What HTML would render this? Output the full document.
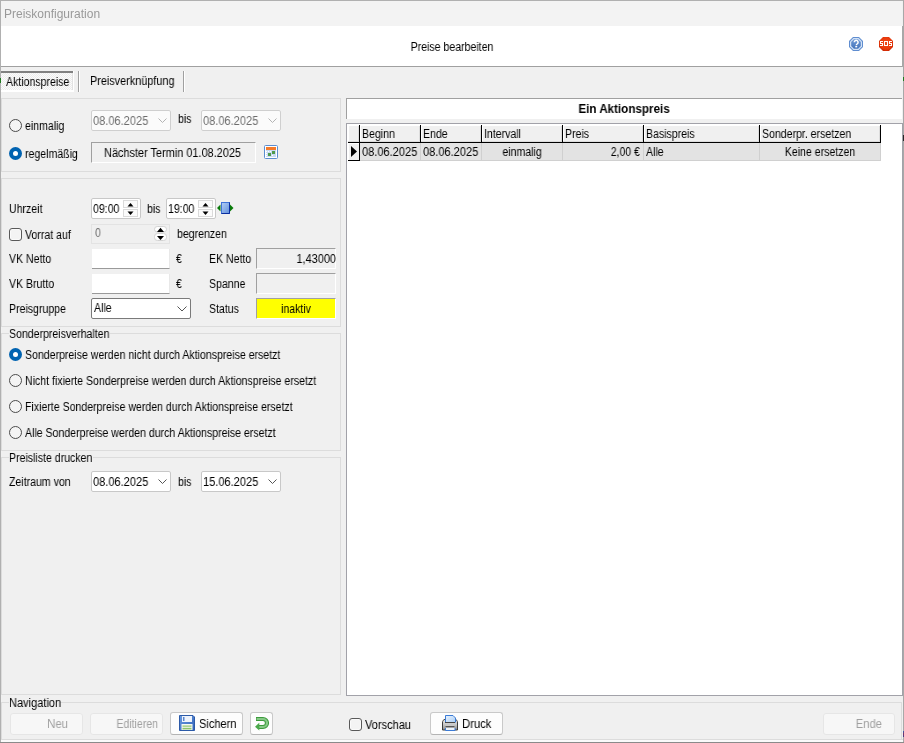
<!DOCTYPE html>
<html><head><meta charset="utf-8">
<style>
*{margin:0;padding:0;box-sizing:border-box}
html,body{width:904px;height:743px;overflow:hidden;background:#f0f0f0}
body{position:relative;font-family:"Liberation Sans",sans-serif;font-size:12px;color:#000}
.a{position:absolute}
.t{position:absolute;font-size:12px;line-height:14px;white-space:nowrap;transform:scaleX(.88);transform-origin:0 0;will-change:transform}
.dt{transform:scaleX(.92)}
.tc{text-align:center;transform-origin:50% 0}
.tr{text-align:right;transform-origin:100% 0}
.grp{position:absolute;border:1px solid #dcdcdc}
.radio{position:absolute;width:13px;height:13px;border-radius:50%;border:1px solid #4a4a4a;background:#f4f4f4}
.radio.on{border:none;background:#0063b1}
.radio.on:after{content:"";position:absolute;left:4px;top:4px;width:5px;height:5px;border-radius:50%;background:#fff}
.chk{position:absolute;width:13px;height:13px;border-radius:3px;border:1px solid #595959;background:#f4f4f4;box-shadow:inset 0 0 0 1px #fbfbfb}
.dp{position:absolute;border:1px solid #7a7a7a;background:#fff;border-radius:2px}
.dp.dis{border-color:#cfcfcf;background:#fbfbfb}
.sunk{position:absolute;background:#f0f0f0;border-top:1px solid #a0a0a0;border-left:1px solid #a0a0a0;border-bottom:1px solid #fff;border-right:1px solid #fff}
.btn{position:absolute;border:1px solid #c9c9c9;border-bottom-color:#b4b4b4;background:#fdfdfd;border-radius:3px}
.btn.dis{border-color:#e6e6e6;background:#f7f7f7}
.gray{color:#6d6d6d}
.dis-t{color:#a0a0a0}
</style></head><body>
<!-- window border -->
<div class="a" style="left:0;top:0;width:904px;height:1px;background:#b0b0b0"></div>
<div class="a" style="left:0;top:0;width:1px;height:743px;background:#b0b0b0"></div>
<div class="a" style="left:903px;top:0;width:1px;height:743px;background:#a8a8a8"></div>
<div class="a" style="left:902px;top:26px;width:1px;height:41px;background:#a8a8a8"></div>
<div class="a" style="left:0;top:742px;width:904px;height:1px;background:#8a8a8a"></div>
<!-- title bar -->
<div class="a" style="left:1px;top:1px;width:901px;height:25px;background:#f3f3f3"></div>
<div class="t" style="left:4px;top:7px;color:#999;transform:none">Preiskonfiguration</div>
<!-- header -->
<div class="a" style="left:1px;top:26px;width:901px;height:40px;background:#fff"></div>
<div class="a" style="left:1px;top:66px;width:901px;height:1px;background:#a0a0a0"></div>
<div class="t tc" style="left:352px;width:200px;top:40px">Preise bearbeiten</div>
<!-- help / sos icons -->
<svg class="a" style="left:849px;top:37px" width="14" height="14" viewBox="0 0 14 14">
 <defs><linearGradient id="hg" x1="0" y1="0" x2="0" y2="1"><stop offset="0" stop-color="#6f9ad6"/><stop offset="1" stop-color="#4474bb"/></linearGradient></defs>
 <polygon points="4,0 10,0 14,4 14,10 10,14 4,14 0,10 0,4" fill="#5f8dd0"/>
 <polygon points="4.4,1 9.6,1 13,4.4 13,9.6 9.6,13 4.4,13 1,9.6 1,4.4" fill="#d3e2f5"/>
 <polygon points="4.9,2.2 9.1,2.2 11.8,4.9 11.8,9.1 9.1,11.8 4.9,11.8 2.2,9.1 2.2,4.9" fill="url(#hg)"/>
 <path d="M5.3 5.3a1.9 1.9 0 1 1 2.9 1.6c-.7.4-.9.7-.9 1.4" fill="none" stroke="#fff" stroke-width="1.5"/>
 <rect x="6.3" y="9" width="1.9" height="1.4" fill="#fff"/>
</svg>
<svg class="a" style="left:879px;top:37px" width="14" height="14" viewBox="0 0 14 14">
 <defs><radialGradient id="sg" cx=".5" cy=".45" r=".6"><stop offset="0" stop-color="#f24a1a"/><stop offset=".7" stop-color="#e83a0c"/><stop offset="1" stop-color="#c42200"/></radialGradient></defs>
 <polygon points="4,0 10,0 14,4 14,10 10,14 4,14 0,10 0,4" fill="url(#sg)"/>
 <g fill="#fff">
  <rect x="1" y="4" width="3" height="1"/><rect x="1" y="5" width="1" height="1"/><rect x="1" y="6" width="3" height="1"/><rect x="3" y="7" width="1" height="1"/><rect x="1" y="8" width="3" height="1"/>
  <rect x="5" y="4" width="4" height="1"/><rect x="5" y="5" width="1" height="3"/><rect x="8" y="5" width="1" height="3"/><rect x="5" y="8" width="4" height="1"/>
  <rect x="10" y="4" width="3" height="1"/><rect x="10" y="5" width="1" height="1"/><rect x="10" y="6" width="3" height="1"/><rect x="12" y="7" width="1" height="1"/><rect x="10" y="8" width="3" height="1"/>
 </g>
</svg>
<!-- tabs -->
<div class="a" style="left:0;top:78px;width:1px;height:5px;background:#1e7a1e"></div>
<div class="a" style="left:903px;top:77px;width:1px;height:4px;background:#1e7a1e"></div>
<div class="a" style="left:1px;top:71px;width:73px;height:21px;background:#fff"></div>
<div class="a" style="left:1px;top:73px;width:71px;height:17px;background:repeating-conic-gradient(#fbfbfb 0 25%,#ececec 0 50%) 0 0/2px 2px"></div>
<div class="a" style="left:72px;top:73px;width:1px;height:17px;background:#e2e2e2"></div>
<div class="a" style="left:1px;top:71px;width:72px;height:2px;background:#808080"></div>
<div class="t" style="left:6px;top:75px">Aktionspreise</div>
<div class="a" style="left:78px;top:71px;width:1px;height:21px;background:#a0a0a0"></div>
<div class="a" style="left:79px;top:71px;width:1px;height:21px;background:#fff"></div>
<div class="t" style="left:90px;top:74px;transform:scaleX(.905)">Preisverknüpfung</div>
<div class="a" style="left:183px;top:71px;width:1px;height:21px;background:#a0a0a0"></div>
<div class="a" style="left:184px;top:71px;width:1px;height:21px;background:#fff"></div>

<!-- group 1 -->
<div class="grp" style="left:1px;top:98px;width:340px;height:74px"></div>
<div class="radio" style="left:9px;top:119px"></div>
<div class="t" style="left:25px;top:119px">einmalig</div>
<div class="radio on" style="left:9px;top:147px"></div>
<div class="t" style="left:25px;top:147px">regelmäßig</div>
<div class="dp dis" style="left:91px;top:110px;width:80px;height:21px"></div>
<div class="t dt gray" style="left:93px;top:114px">08.06.2025</div>
<svg class="a" style="left:158px;top:118px" width="10" height="6"><path d="M.5 .5L4.5 4.5 8.5.5" fill="none" stroke="#b4b4b4"/></svg>
<div class="t" style="left:178px;top:112px">bis</div>
<div class="dp dis" style="left:201px;top:110px;width:80px;height:21px"></div>
<div class="t dt gray" style="left:203px;top:114px">08.06.2025</div>
<svg class="a" style="left:268px;top:118px" width="10" height="6"><path d="M.5 .5L4.5 4.5 8.5.5" fill="none" stroke="#b4b4b4"/></svg>
<div class="sunk" style="left:91px;top:142px;width:165px;height:21px"></div>
<div class="t tc" style="left:89.5px;width:165px;top:146px;transform:scaleX(.91)">Nächster Termin 01.08.2025</div>
<svg class="a" style="left:264px;top:145px" width="14" height="14" viewBox="0 0 14 14">
 <rect x=".5" y=".5" width="13" height="13" rx="1" fill="#fff" stroke="#5a8dd0"/>
 <rect x="2" y="2" width="10" height="3" fill="#f47a2a"/>
 <rect x="2" y="5" width="10" height="7" fill="#c8daf2"/>
 <g fill="#fff"><rect x="2" y="6" width="1" height="1"/><rect x="4" y="6" width="1" height="1"/><rect x="6" y="6" width="1" height="1"/><rect x="8" y="6" width="1" height="1"/><rect x="10" y="6" width="1" height="1"/>
 <rect x="2" y="8" width="1" height="1"/><rect x="4" y="8" width="1" height="1"/><rect x="10" y="8" width="1" height="1"/>
 <rect x="2" y="10" width="1" height="1"/><rect x="6" y="10" width="1" height="1"/><rect x="8" y="10" width="1" height="1"/></g>
 <rect x="4" y="8" width="3" height="3" fill="#4f9a4a"/>
 <rect x="8" y="6" width="3" height="3" fill="#4f9a4a"/>
</svg>

<!-- group 2 -->
<div class="grp" style="left:1px;top:178px;width:340px;height:149px"></div>
<div class="t" style="left:9px;top:202px">Uhrzeit</div>
<div class="dp" style="left:91px;top:198px;width:50px;height:21px;border-color:#c8c8c8"></div>
<div class="t" style="left:93px;top:202px">09:00</div>
<div class="t" style="left:147px;top:202px">bis</div>
<div class="dp" style="left:166px;top:198px;width:50px;height:21px;border-color:#c8c8c8"></div>
<div class="t" style="left:168px;top:202px">19:00</div>
<div class="a" style="left:123px;top:200px;width:15px;height:8px;border:1px solid #dadada;background:#fbfbfb"></div>
<div class="a" style="left:123px;top:209px;width:15px;height:8px;border:1px solid #dadada;background:#fbfbfb"></div>
<svg class="a" style="left:127px;top:202px" width="7" height="14"><path d="M.5 4.5L3.5 1 6.5 4.5z" fill="#000"/><path d="M.5 9.5L3.5 13 6.5 9.5z" fill="#000"/></svg>
<div class="a" style="left:198px;top:200px;width:15px;height:8px;border:1px solid #dadada;background:#fbfbfb"></div>
<div class="a" style="left:198px;top:209px;width:15px;height:8px;border:1px solid #dadada;background:#fbfbfb"></div>
<svg class="a" style="left:202px;top:202px" width="7" height="14"><path d="M.5 4.5L3.5 1 6.5 4.5z" fill="#000"/><path d="M.5 9.5L3.5 13 6.5 9.5z" fill="#000"/></svg>
<svg class="a" style="left:216px;top:201px" width="19" height="14" viewBox="0 0 19 14">
 <defs><linearGradient id="bg1" x1="0" y1="0" x2="1" y2="1"><stop offset="0" stop-color="#b4cff5"/><stop offset="1" stop-color="#5f8fdc"/></linearGradient></defs>
 <path d="M1 7L4.5 3.5 4.5 10.5z" fill="#0a7a0a"/>
 <path d="M14 3.5L17.5 7 14 10.5z" fill="#0a7a0a"/>
 <rect x="5.5" y="1.5" width="8" height="11" fill="url(#bg1)" stroke="#3f73d8"/>
 <path d="M13.5 1.5v11h-8" fill="none" stroke="#0b2ea0"/>
</svg>
<div class="chk" style="left:9px;top:228px"></div>
<div class="t" style="left:25px;top:228px">Vorrat auf</div>
<div class="a" style="left:91px;top:224px;width:79px;height:20px;border:1px solid #e3e3e3;background:#f0f0f0"></div>
<div class="t gray" style="left:95px;top:226px">0</div>
<svg class="a" style="left:154px;top:226px" width="13" height="15" viewBox="0 0 13 15">
 <rect x=".5" y=".5" width="12" height="5.5" rx="2.75" fill="#fff" stroke="#d2d2d2"/>
 <rect x=".5" y="7.5" width="12" height="7" rx="3" fill="#fff" stroke="#d2d2d2"/>
 <path d="M3 5.9L6.5 1.8 10 5.9z" fill="#000"/>
 <path d="M3 9.9L10 9.9 6.5 14z" fill="#000"/>
</svg>
<div class="t" style="left:177px;top:227px">begrenzen</div>
<div class="t" style="left:9px;top:252px">VK Netto</div>
<div class="a" style="left:92px;top:249px;width:78px;height:20px;background:#fff;border-bottom:1px solid #9a9a9a;border-right:1px solid #e8e8e8"></div>
<div class="t" style="left:176px;top:252px">€</div>
<div class="t" style="left:9px;top:277px">VK Brutto</div>
<div class="a" style="left:92px;top:274px;width:78px;height:20px;background:#fff;border-bottom:1px solid #9a9a9a;border-right:1px solid #e8e8e8"></div>
<div class="t" style="left:176px;top:277px">€</div>
<div class="t" style="left:9px;top:302px">Preisgruppe</div>
<div class="a" style="left:91px;top:298px;width:100px;height:21px;background:#fff;border:1px solid #7a7a7a;border-radius:2px"></div>
<div class="t" style="left:94px;top:301px">Alle</div>
<svg class="a" style="left:177px;top:306px" width="10" height="6"><path d="M.5 .5L5 5 9.5.5" fill="none" stroke="#555"/></svg>
<div class="t" style="left:209px;top:252px">EK Netto</div>
<div class="sunk" style="left:256px;top:248px;width:80px;height:21px"></div>
<div class="t tr" style="left:236px;width:100px;top:252px;transform:scaleX(.91)">1,43000</div>
<div class="t" style="left:209px;top:277px">Spanne</div>
<div class="sunk" style="left:256px;top:273px;width:80px;height:21px"></div>
<div class="t" style="left:209px;top:302px">Status</div>
<div class="sunk" style="left:256px;top:298px;width:80px;height:21px;background:#ffff00"></div>
<div class="t tc" style="left:256px;width:80px;top:302px">inaktiv</div>

<!-- group 3 -->
<div class="grp" style="left:1px;top:333px;width:340px;height:118px"></div>
<div class="a" style="left:9px;top:328px;width:101px;height:12px;background:#f0f0f0"></div>
<div class="t" style="left:9px;top:327px">Sonderpreisverhalten</div>
<div class="radio on" style="left:9px;top:348px"></div>
<div class="t" style="left:25px;top:348px">Sonderpreise werden nicht durch Aktionspreise ersetzt</div>
<div class="radio" style="left:9px;top:374px"></div>
<div class="t" style="left:25px;top:374px">Nicht fixierte Sonderpreise werden durch Aktionspreise ersetzt</div>
<div class="radio" style="left:9px;top:400px"></div>
<div class="t" style="left:25px;top:400px">Fixierte Sonderpreise werden durch Aktionspreise ersetzt</div>
<div class="radio" style="left:9px;top:426px"></div>
<div class="t" style="left:25px;top:426px">Alle Sonderpreise werden durch Aktionspreise ersetzt</div>

<!-- group 4 -->
<div class="grp" style="left:1px;top:457px;width:340px;height:238px"></div>
<div class="a" style="left:9px;top:452px;width:84px;height:12px;background:#f0f0f0"></div>
<div class="t" style="left:9px;top:451px">Preisliste drucken</div>
<div class="t" style="left:9px;top:475px">Zeitraum von</div>
<div class="dp" style="left:91px;top:471px;width:80px;height:21px;border-color:#c8c8c8"></div>
<div class="t dt" style="left:93px;top:475px">08.06.2025</div>
<svg class="a" style="left:158px;top:479px" width="10" height="6"><path d="M.5 .5L4.5 4.5 8.5.5" fill="none" stroke="#555"/></svg>
<div class="t" style="left:178px;top:475px">bis</div>
<div class="dp" style="left:201px;top:471px;width:80px;height:21px;border-color:#c8c8c8"></div>
<div class="t dt" style="left:203px;top:475px">15.06.2025</div>
<svg class="a" style="left:268px;top:479px" width="10" height="6"><path d="M.5 .5L4.5 4.5 8.5.5" fill="none" stroke="#555"/></svg>

<!-- right panel -->
<div class="a" style="left:346px;top:98px;width:556px;height:21px;background:#fff;border-top:1px solid #a0a0a0;border-left:1px solid #a0a0a0"></div>
<div class="t tc" style="left:346px;width:556px;top:102px;font-weight:bold;transform:scaleX(.97)">Ein Aktionspreis</div>
<div class="a" style="left:346px;top:123px;width:557px;height:573px;background:#fff;border:1px solid #a2a2a9"></div>
<!-- grid -->
<div class="a" style="left:348px;top:125px;width:532px;height:17px;background:#f0f0f0"></div>
<div class="a" style="left:348px;top:125px;width:11px;height:1px;background:#fff"></div>
<div class="a" style="left:348px;top:125px;width:1px;height:17px;background:#fff"></div>
<div class="a" style="left:358px;top:126px;width:1px;height:16px;background:#dcdcdc"></div>
<div class="a" style="left:348px;top:141px;width:11px;height:1px;background:#dcdcdc"></div>
<div class="a" style="left:360px;top:125px;width:60px;height:1px;background:#fff"></div>
<div class="a" style="left:360px;top:125px;width:1px;height:17px;background:#fff"></div>
<div class="a" style="left:419px;top:126px;width:1px;height:16px;background:#dcdcdc"></div>
<div class="a" style="left:360px;top:141px;width:60px;height:1px;background:#dcdcdc"></div>
<div class="a" style="left:421px;top:125px;width:60px;height:1px;background:#fff"></div>
<div class="a" style="left:421px;top:125px;width:1px;height:17px;background:#fff"></div>
<div class="a" style="left:480px;top:126px;width:1px;height:16px;background:#dcdcdc"></div>
<div class="a" style="left:421px;top:141px;width:60px;height:1px;background:#dcdcdc"></div>
<div class="a" style="left:482px;top:125px;width:80px;height:1px;background:#fff"></div>
<div class="a" style="left:482px;top:125px;width:1px;height:17px;background:#fff"></div>
<div class="a" style="left:561px;top:126px;width:1px;height:16px;background:#dcdcdc"></div>
<div class="a" style="left:482px;top:141px;width:80px;height:1px;background:#dcdcdc"></div>
<div class="a" style="left:563px;top:125px;width:80px;height:1px;background:#fff"></div>
<div class="a" style="left:563px;top:125px;width:1px;height:17px;background:#fff"></div>
<div class="a" style="left:642px;top:126px;width:1px;height:16px;background:#dcdcdc"></div>
<div class="a" style="left:563px;top:141px;width:80px;height:1px;background:#dcdcdc"></div>
<div class="a" style="left:644px;top:125px;width:115px;height:1px;background:#fff"></div>
<div class="a" style="left:644px;top:125px;width:1px;height:17px;background:#fff"></div>
<div class="a" style="left:758px;top:126px;width:1px;height:16px;background:#dcdcdc"></div>
<div class="a" style="left:644px;top:141px;width:115px;height:1px;background:#dcdcdc"></div>
<div class="a" style="left:760px;top:125px;width:120px;height:1px;background:#fff"></div>
<div class="a" style="left:760px;top:125px;width:1px;height:17px;background:#fff"></div>
<div class="a" style="left:879px;top:126px;width:1px;height:16px;background:#dcdcdc"></div>
<div class="a" style="left:760px;top:141px;width:120px;height:1px;background:#dcdcdc"></div>
<div class="a" style="left:360px;top:143px;width:520px;height:17px;background:#e3e3e3"></div>
<div class="a" style="left:348px;top:143px;width:11px;height:17px;background:#f0f0f0"></div>
<div class="a" style="left:348px;top:143px;width:11px;height:1px;background:#fff"></div>
<div class="a" style="left:348px;top:143px;width:1px;height:17px;background:#fff"></div>
<div class="a" style="left:420px;top:143px;width:1px;height:18px;background:#d0d0d0"></div>
<div class="a" style="left:481px;top:143px;width:1px;height:18px;background:#d0d0d0"></div>
<div class="a" style="left:562px;top:143px;width:1px;height:18px;background:#d0d0d0"></div>
<div class="a" style="left:643px;top:143px;width:1px;height:18px;background:#d0d0d0"></div>
<div class="a" style="left:759px;top:143px;width:1px;height:18px;background:#d0d0d0"></div>
<div class="a" style="left:880px;top:143px;width:1px;height:18px;background:#d0d0d0"></div>
<div class="a" style="left:360px;top:160px;width:521px;height:1px;background:#d0d0d0"></div>
<div class="a" style="left:359px;top:125px;width:1px;height:36px;background:#000"></div>
<div class="a" style="left:420px;top:125px;width:1px;height:18px;background:#000"></div>
<div class="a" style="left:481px;top:125px;width:1px;height:18px;background:#000"></div>
<div class="a" style="left:562px;top:125px;width:1px;height:18px;background:#000"></div>
<div class="a" style="left:643px;top:125px;width:1px;height:18px;background:#000"></div>
<div class="a" style="left:759px;top:125px;width:1px;height:18px;background:#000"></div>
<div class="a" style="left:880px;top:125px;width:1px;height:18px;background:#000"></div>
<div class="a" style="left:348px;top:142px;width:533px;height:1px;background:#000"></div>
<div class="a" style="left:348px;top:160px;width:12px;height:1px;background:#000"></div>
<svg class="a" style="left:350px;top:145px" width="8" height="13"><path d="M1 1L7 6.5 1 12z" fill="#000"/></svg>
<div class="t" style="left:362px;top:127px">Beginn</div>
<div class="t" style="left:423px;top:127px">Ende</div>
<div class="t" style="left:484px;top:127px">Intervall</div>
<div class="t" style="left:565px;top:127px">Preis</div>
<div class="t" style="left:646px;top:127px">Basispreis</div>
<div class="t" style="left:762px;top:127px">Sonderpr. ersetzen</div>
<div class="t dt" style="left:362px;top:145px">08.06.2025</div>
<div class="t dt" style="left:423px;top:145px">08.06.2025</div>
<div class="t tc" style="left:482px;width:80px;top:145px">einmalig</div>
<div class="t tr" style="left:560px;width:80px;top:145px">2,00 €</div>
<div class="t" style="left:646px;top:145px">Alle</div>
<div class="t tc" style="left:760px;width:120px;top:145px">Keine ersetzen</div>

<!-- navigation -->
<div class="grp" style="left:1px;top:702px;width:901px;height:38px;border-bottom:none"></div>
<div class="a" style="left:9px;top:697px;width:51px;height:12px;background:#f0f0f0"></div>
<div class="t" style="left:9px;top:696px;transform:scaleX(.92)">Navigation</div>
<div class="btn dis" style="left:10px;top:713px;width:73px;height:22px"></div>
<div class="t tr dis-t" style="left:20px;width:48px;top:717px;transform:scaleX(.95)">Neu</div>
<div class="btn dis" style="left:90px;top:713px;width:73px;height:22px"></div>
<div class="t tr dis-t" style="left:100px;width:58px;top:717px">Editieren</div>
<div class="btn" style="left:170px;top:712px;width:73px;height:23px"></div>
<div class="t" style="left:199px;top:717px;transform:scaleX(.92)">Sichern</div>
<svg class="a" style="left:179px;top:715px" width="16" height="16" viewBox="0 0 16 16">
 <defs><linearGradient id="fg" x1="0" y1="0" x2="1" y2="1"><stop offset="0" stop-color="#6b9be0"/><stop offset="1" stop-color="#2f62b8"/></linearGradient></defs>
 <path d="M.5 .5h13.5l1.5 1.5v13.5h-15z" fill="url(#fg)" stroke="#2c5aa8"/>
 <rect x="3" y="1" width="10" height="6" fill="#eef3fb"/>
 <rect x="4" y="2" width="1.5" height="4" fill="#5a86cc"/>
 <rect x="2.5" y="9" width="11" height="6" fill="#f6f8f2"/>
 <rect x="3.5" y="10.5" width="9" height="1.2" fill="#8cc46a"/>
 <rect x="3.5" y="12.8" width="9" height="1.6" fill="#8cc46a"/>
</svg>

<div class="btn" style="left:250px;top:712px;width:23px;height:23px"></div>
<svg class="a" style="left:254px;top:716px" width="16" height="16" viewBox="0 0 16 16">
 <path d="M2 3H9A4 4 0 0 1 9 11H5" fill="none" stroke="#3c9a3c" stroke-width="4.2"/>
 <path d="M2.6 3H9A4 4 0 0 1 9 11H5" fill="none" stroke="#86c986" stroke-width="2.2"/>
 <path d="M1 10.7L5.3 6.8V14.6z" fill="#4aa84a"/>
</svg>
<div class="chk" style="left:349px;top:718px"></div>
<div class="t" style="left:365px;top:718px;transform:scaleX(.92)">Vorschau</div>
<div class="btn" style="left:430px;top:712px;width:73px;height:23px"></div>
<div class="t" style="left:462px;top:717px;transform:scaleX(.94)">Druck</div>
<svg class="a" style="left:441px;top:714px" width="18" height="18" viewBox="0 0 18 18">
 <defs><linearGradient id="pg" x1="0" y1="0" x2="0" y2="1"><stop offset="0" stop-color="#f4f4f4"/><stop offset=".5" stop-color="#c4c4c4"/><stop offset="1" stop-color="#8a8a8a"/></linearGradient>
 <linearGradient id="pp" x1="0" y1="0" x2="1" y2="1"><stop offset="0" stop-color="#eaf3fd"/><stop offset="1" stop-color="#a9cdf5"/></linearGradient></defs>
 <path d="M1.5 16V9c0-2.5 1-3.5 2.5-3.5h10c1.5 0 2.5 1 2.5 3.5v7z" fill="url(#pg)" stroke="#3a3a3a"/>
 <path d="M4.5 8.5V1.5h7.5l2.5 2.5v4.5" fill="url(#pp)" stroke="#3b7bd6"/>
 <path d="M4 8.5h10" stroke="#444"/>
 <rect x="4.5" y="9.5" width="9" height="3" fill="#c9c9c9"/>
 <path d="M4.5 12.5h9" stroke="#555"/>
 <path d="M4.5 14v2.5h9.5V14" fill="#eef4fb" stroke="#3b7bd6"/>
</svg>
<div class="btn dis" style="left:823px;top:713px;width:72px;height:22px"></div>
<div class="t tr dis-t" style="left:830px;width:52px;top:717px;transform:scaleX(.94)">Ende</div>
<div class="a" style="left:1px;top:739px;width:902px;height:1px;background:#dcdcdc"></div>
<div class="a" style="left:1px;top:740px;width:902px;height:2px;background:#fafafa"></div>
<div class="a" style="left:903px;top:135px;width:1px;height:6px;background:#262626"></div>
<div class="a" style="left:903px;top:731px;width:1px;height:6px;background:linear-gradient(#2f5fb0,#7a2f60 50%,#3a3f90)"></div>
</body></html>
